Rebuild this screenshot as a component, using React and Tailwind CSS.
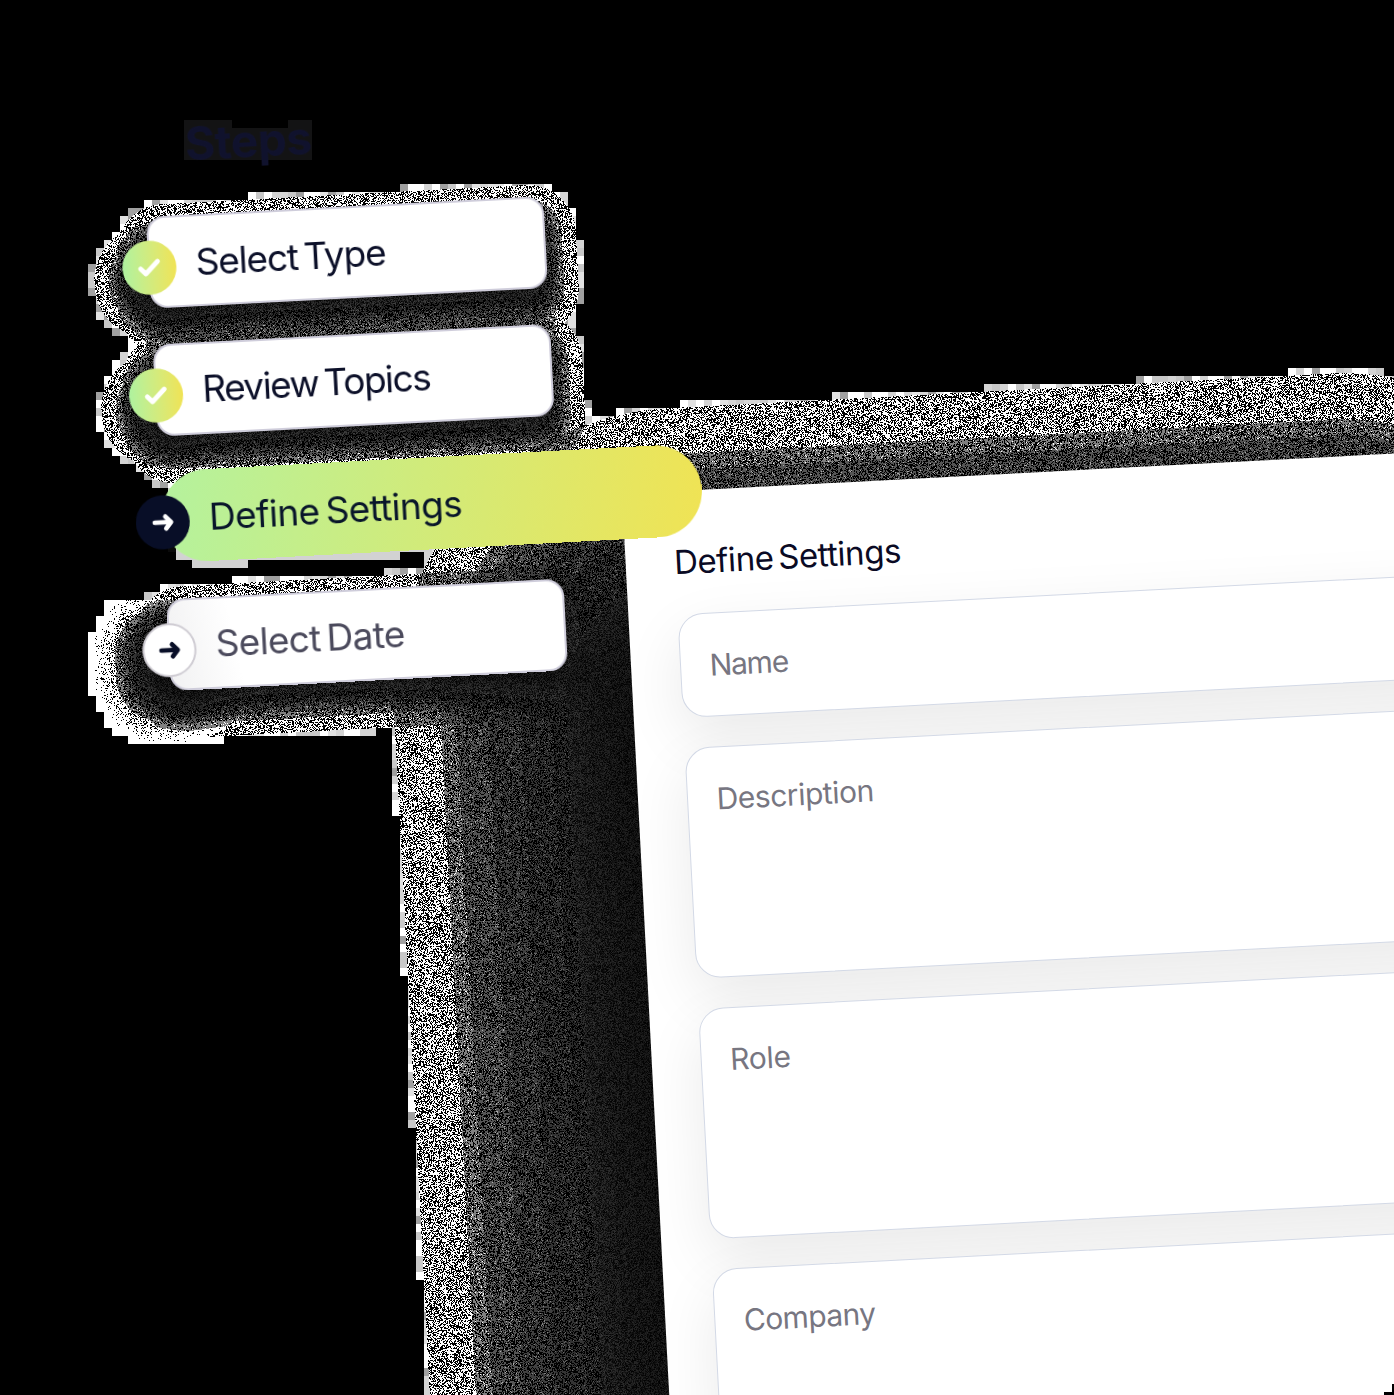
import { useEffect, useRef } from "react";

const W = 1394;
const H = 1395;
const COS = Math.cos((3 * Math.PI) / 180);
const SIN = Math.sin((3 * Math.PI) / 180);

// Depth inside the rounded outline that surrounds a tilted box by `spread`.
function boxDepth(x, y, b) {
  const dx = x - b.cx;
  const dy = y - b.cy;
  const u = Math.abs(dx * COS - dy * SIN) - b.hw;
  const v = Math.abs(dx * SIN + dy * COS) - b.hh;
  const ox = Math.max(u, 0);
  const oy = Math.max(v, 0);
  return b.spread - (Math.sqrt(ox * ox + oy * oy) + Math.min(Math.max(u, v), 0));
}

const cardShadows = [
  { cx: 347, cy: 270, hw: 182, hh: 28, spread: 48 },
  { cx: 353.5, cy: 397, hw: 182, hh: 28, spread: 48 },
  { cx: 367, cy: 652, hw: 182, hh: 28, spread: 48 },
  { cx: 150, cy: 281, hw: 2, hh: 2, spread: 54 },
  { cx: 157, cy: 409, hw: 2, hh: 2, spread: 54 },
];
const dotShadow = { cx: 171, cy: 664, hw: 12, hh: 12, spread: 66 };
const panelShadow = { cx: 1052, cy: 1429, hw: 330, hh: 750, spread: 290 };
const pill = { cx: 432, cy: 504, hw: 224, hh: 0, spread: 46 };
const titleTint = [
  [184, 120, 48, 40],
  [232, 128, 56, 32],
  [288, 120, 24, 40],
];

function paintGrain(canvas) {
  const ctx = canvas.getContext("2d");
  const img = ctx.createImageData(W, H);
  let seed = 1234567;
  const rnd = () => {
    seed = (Math.imul(seed, 1664525) + 1013904223) >>> 0;
    return seed / 4294967296;
  };
  const put = (x, y, v) => {
    const i = (y * W + x) * 4;
    img.data[i] = img.data[i + 1] = img.data[i + 2] = v;
    img.data[i + 3] = 255;
  };
  const rims = [200, 212, 255, 255, 160, 225];
  for (let by = 0; by < H; by += 8) {
    for (let bx = 0; bx < W; bx += 8) {
      const rest = [];
      let hit = false;
      let dotHit = false;
      let pillHit = false;
      for (let y = by; y < Math.min(by + 8, H); y++) {
        for (let x = bx; x < Math.min(bx + 8, W); x++) {
          let a = 0;
          let light = 0;
          for (const b of cardShadows) {
            const d = boxDepth(x, y, b);
            if (d > 0) a += 0.6 + (d / 15) ** 2;
          }
          const dd = boxDepth(x, y, dotShadow);
          if (dd > 0 && y >= 600) {
            dotHit = true;
            if (a < 1.6) light = Math.max(0, 0.47 - dd / 60);
            a += 0.5 + (dd / 22) ** 2.4;
          }
          const pd = boxDepth(x, y, panelShadow);
          if (pd > 0) {
            a += pd < 46 ? 1 : pd < 172 ? 2 + (pd - 46) / 32 : 9 + (pd - 172) / 9;
          }
          if (a > 0) {
            hit = true;
            const level = Math.max(1, Math.round(a));
            const n =
              level < 8
                ? (rnd() < 0.53 + light ? 1 : 0) + (level > 1 && rnd() < 0.08 ? 1 : 0)
                : rnd() * 2;
            put(x, y, Math.min(255, (255 * n) / level));
          } else {
            if (boxDepth(x, y, pill) > 0) pillHit = true;
            rest.push([x, y]);
          }
        }
      }
      if (hit || pillHit) {
        const rim = dotHit ? 255 : hit ? rims[Math.floor(rnd() * rims.length)] : 210;
        const nearDot = bx >= 136 && bx < 176 && by >= 496 && by < 552;
        for (const [x, y] of rest) put(x, y, nearDot ? 10 : rim);
      }
    }
  }
  ctx.putImageData(img, 0, 0);
  ctx.fillStyle = "#131314";
  titleTint.forEach((r) => ctx.fillRect(...r));
}

function Grain() {
  const ref = useRef(null);
  useEffect(() => paintGrain(ref.current), []);
  return <canvas ref={ref} width={W} height={H} className="absolute inset-0" />;
}

function Check() {
  return (
    <svg width="54" height="54" viewBox="-27 -27 54 54" fill="none" stroke="#fff" strokeWidth="4.8" strokeLinecap="round" strokeLinejoin="round" className="shrink-0">
      <path d="M-8.8 .8 L-3.8 6 L8.4 -6" />
    </svg>
  );
}

function Arrow() {
  return (
    <svg width="54" height="54" viewBox="-27 -27 54 54" fill="none" stroke="currentColor" strokeWidth="4.6" strokeLinecap="round" strokeLinejoin="round" className="shrink-0">
      <path d="M-8 0 H8 M2.8 -5.7 L8.3 0 L3.2 6.2" />
    </svg>
  );
}

const steps = [
  {
    label: "Select Type",
    box: "w-[398px] rounded-[18px] border-2 border-[#cfcddb] bg-white pl-[45.5px]",
    text: "text-[#0c1029] tracking-[-1.15px]",
    dot: "-left-[28px] top-[22px] bg-linear-to-r from-[#aef29f] to-[#f0e354]",
    icon: <Check />,
  },
  {
    label: "Review Topics",
    box: "w-[398px] rounded-[18px] border-2 border-[#cfcddb] bg-white pl-[45.5px]",
    text: "text-[#0c1029] tracking-[-1.5px]",
    dot: "-left-[28px] top-[22px] bg-linear-to-r from-[#aef29f] to-[#f0e354]",
    icon: <Check />,
  },
  {
    label: "Define Settings",
    box: "w-[541px] rounded-full bg-linear-[100deg] from-[#b4f29e] to-[#f0e354] pl-[47.5px]",
    text: "text-[#08152a] tracking-[-0.65px]",
    dot: "-left-[26px] top-[24px] bg-[#080e27] text-white",
    icon: <Arrow />,
  },
  {
    label: "Select Date",
    box: "w-[398px] rounded-[18px] border-2 border-[#cfcddb] bg-linear-[80deg] from-[#f1f1f2] via-white via-18% to-white pl-[45.5px]",
    text: "text-[#4b4a5c] tracking-[-0.7px]",
    dot: "-left-[28px] top-[22px] border-2 border-[#cfccd3] bg-white text-[#080e27]",
    icon: <Arrow />,
  },
];

const fields = [
  { label: "Name", size: "h-[104px]", text: "tracking-[-1.2px]" },
  { label: "Description", size: "h-[231px]", text: "tracking-[-0.45px]" },
  { label: "Role", size: "h-[231px]", text: "tracking-[-0.3px]" },
  { label: "Company", size: "h-[231px]", text: "tracking-[-0.6px]" },
];

export default function App() {
  return (
    <main className="relative flex h-[1395px] w-[1394px] items-start overflow-hidden bg-black font-[Inter,sans-serif]">
      <Grain />
      <aside className="relative z-10 ml-[140px] mt-[107px] w-[482px] shrink-0 origin-top-left -rotate-3">
        <div className="flex h-[110px] items-start pl-[43px] pt-[16px]">
          <h1 className="whitespace-nowrap text-[46px] leading-[46px] font-bold tracking-[-0.4px] text-[#10122d]">Steps</h1>
        </div>
        <ol className="flex flex-col gap-[35.5px]">
          {steps.map((s) => (
            <li key={s.label} className={`relative flex h-[92px] items-center ${s.box}`}>
              <span className={`absolute flex size-[54px] items-center justify-center rounded-full ${s.dot}`}>{s.icon}</span>
              <span className={`mt-[3px] whitespace-nowrap text-[37px] leading-[44px] [word-spacing:-3.5px] ${s.text}`}>{s.label}</span>
            </li>
          ))}
        </ol>
      </aside>
      <section className="relative mt-[494px] h-[1100px] w-[1000px] shrink-0 origin-top-left -rotate-3 bg-white pl-[48.5px] pt-[49px]">
        <h2 className="h-[73.5px] whitespace-nowrap text-[33px] leading-[44px] tracking-[-0.45px] text-[#0a0a24] [word-spacing:-4px]">
          Define Settings
        </h2>
        <div className="flex flex-col gap-[30px]">
          {fields.map((f) => (
            <div
              key={f.label}
              className={`relative rounded-[25px] border-[1.5px] border-[#d3d9e6] bg-white pl-[29px] pt-[31.5px] shadow-[0_22px_60px_rgba(0,0,0,0.085)] ${f.size}`}
            >
              <span className={`text-[30px] leading-[40px] text-[#777681] ${f.text}`}>{f.label}</span>
            </div>
          ))}
        </div>
      </section>
      <span className="absolute right-0 bottom-0 h-[3px] w-[10px] bg-black" />
      <span className="absolute right-0 bottom-0 h-[11px] w-[2px] bg-black" />
    </main>
  );
}
